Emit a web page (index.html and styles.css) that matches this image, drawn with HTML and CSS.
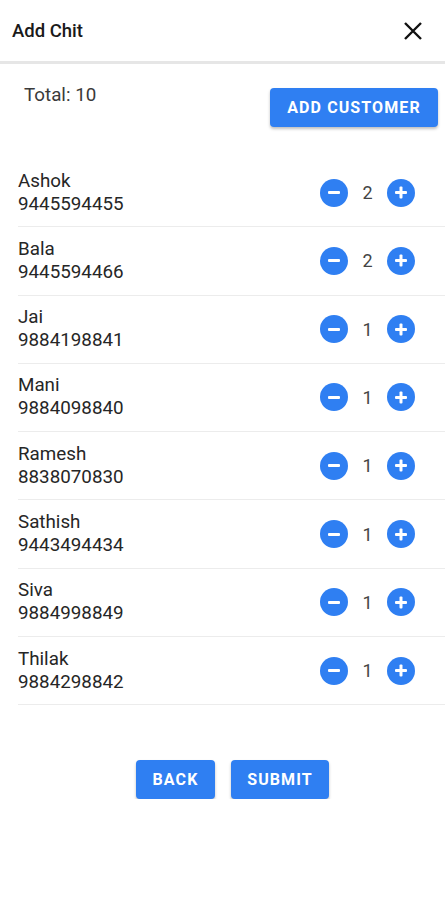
FILE: index.html
```html
<!DOCTYPE html>
<html lang="en">
<head>
    <meta charset="UTF-8">
    <meta name="viewport" content="width=device-width, initial-scale=1.0">
    <title>Add Chit</title>
    <link rel="stylesheet" href="styles.css">
</head>
<body>
    <div class="header">
        <div class="title">Add Chit</div>
        <button class="close" aria-label="Close">
            <svg width="20" height="20" viewBox="0 0 20 20">
                <path d="M2 2 L18 18 M18 2 L2 18" stroke="#111" stroke-width="2.4" fill="none"/>
            </svg>
        </button>
    </div>

    <div class="summary">
        <div class="total">Total: 10</div>
        <button class="btn add">Add Customer</button>
    </div>

    <div class="list">
        <div class="row">
            <div class="person"><div>Ashok</div><div>9445594455</div></div>
            <div class="qty">
                <span class="round minus"></span><span class="count">2</span><span class="round plus"></span>
            </div>
        </div>
        <div class="row">
            <div class="person"><div>Bala</div><div>9445594466</div></div>
            <div class="qty">
                <span class="round minus"></span><span class="count">2</span><span class="round plus"></span>
            </div>
        </div>
        <div class="row">
            <div class="person"><div>Jai</div><div>9884198841</div></div>
            <div class="qty">
                <span class="round minus"></span><span class="count">1</span><span class="round plus"></span>
            </div>
        </div>
        <div class="row">
            <div class="person"><div>Mani</div><div>9884098840</div></div>
            <div class="qty">
                <span class="round minus"></span><span class="count">1</span><span class="round plus"></span>
            </div>
        </div>
        <div class="row">
            <div class="person"><div>Ramesh</div><div>8838070830</div></div>
            <div class="qty">
                <span class="round minus"></span><span class="count">1</span><span class="round plus"></span>
            </div>
        </div>
        <div class="row">
            <div class="person"><div>Sathish</div><div>9443494434</div></div>
            <div class="qty">
                <span class="round minus"></span><span class="count">1</span><span class="round plus"></span>
            </div>
        </div>
        <div class="row">
            <div class="person"><div>Siva</div><div>9884998849</div></div>
            <div class="qty">
                <span class="round minus"></span><span class="count">1</span><span class="round plus"></span>
            </div>
        </div>
        <div class="row">
            <div class="person"><div>Thilak</div><div>9884298842</div></div>
            <div class="qty">
                <span class="round minus"></span><span class="count">1</span><span class="round plus"></span>
            </div>
        </div>
    </div>

    <div class="actions">
        <button class="btn back">Back</button>
        <button class="btn submit">Submit</button>
    </div>
</body>
</html>
```

FILE: styles.css
```css
body {
    margin: 0;
    font-family: Roboto, "Liberation Sans", Arial, sans-serif;
    background: #fff;
    color: #222;
}
.header {
    height: 61px;
    display: flex;
    align-items: center;
    justify-content: space-between;
    padding: 0 22px 0 12px;
    border-bottom: 3px solid #e6e6e6;
}
.title {
    font-size: 18.5px;
    font-weight: 500;
    color: #1a1a1a;
}
.close {
    background: none;
    border: none;
    padding: 0;
    width: 20px;
    height: 20px;
    cursor: pointer;
}
.close svg {
    display: block;
}
.summary {
    display: flex;
    justify-content: space-between;
    align-items: flex-start;
    padding: 20px 7px 0 24px;
    height: 75px;
}
.total {
    font-size: 18.8px;
    color: #3a3a3a;
}
.btn {
    font-family: Roboto, "Liberation Sans", Arial, sans-serif;
    background-color: #2f7ff2;
    color: #fff;
    border: none;
    border-radius: 4px;
    text-transform: uppercase;
    font-size: 16px;
    font-weight: 700;
    letter-spacing: 1.1px;
    height: 39px;
    padding: 0;
    box-shadow: 0 2px 3px rgba(0, 0, 0, 0.25);
    cursor: pointer;
}
.add {
    margin-top: 4px;
    width: 168px;
}
.list {
    padding-left: 18px;
}
.row {
    display: flex;
    justify-content: space-between;
    align-items: center;
    padding: 10.65px 0;
    border-bottom: 1px solid #ececec;
    font-size: 18.8px;
    line-height: 23px;
}
.person {
    color: #262626;
}
.qty {
    display: flex;
    align-items: center;
    margin-right: 30px;
}
.round {
    position: relative;
    width: 28px;
    height: 28px;
    border-radius: 50%;
    background-color: #2f7ff2;
}
.round::before,
.round::after {
    content: "";
    position: absolute;
    left: 8px;
    top: 12.5px;
    width: 12px;
    height: 3px;
    border-radius: 1px;
    background: #fff;
}
.minus::after {
    display: none;
}
.plus::after {
    transform: rotate(90deg);
}
.count {
    width: 39px;
    text-align: center;
    color: #444;
    font-size: 18px;
}
.actions {
    display: flex;
    justify-content: center;
    gap: 16px;
    padding-left: 20px;
    margin-top: 55px;
}
.back {
    width: 79px;
}
.submit {
    width: 98px;
}
```
